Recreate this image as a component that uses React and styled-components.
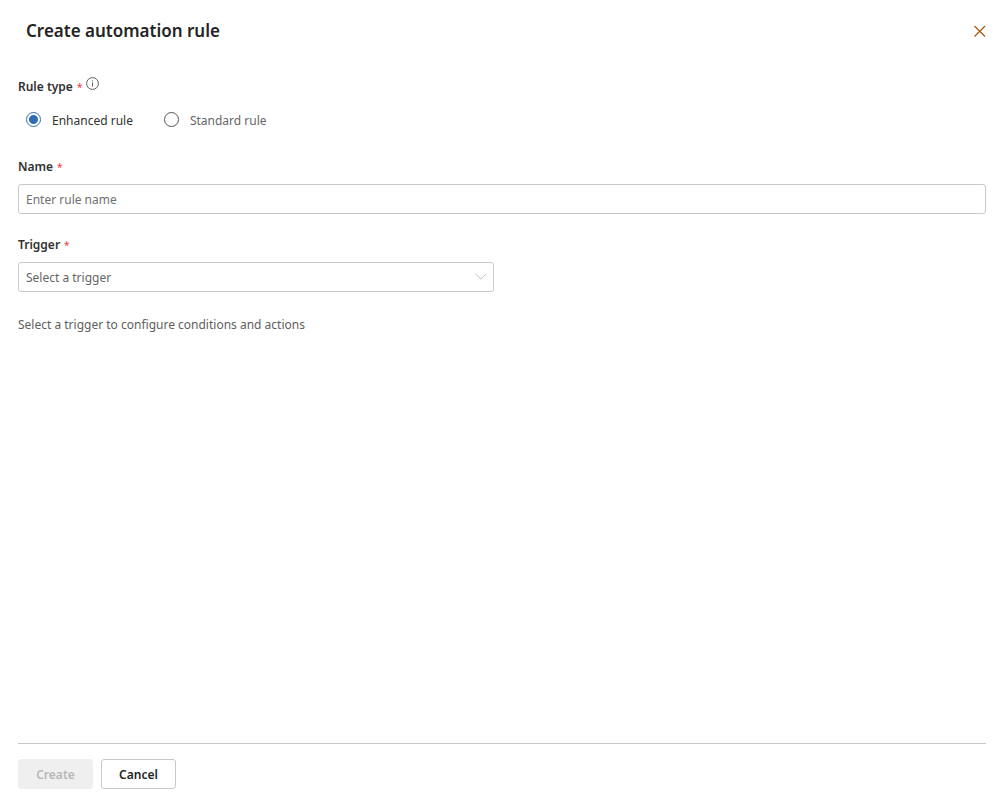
import React, { useState } from "react";
import styled, { createGlobalStyle } from "styled-components";

const GlobalStyle = createGlobalStyle`
  *, *::before, *::after { box-sizing: border-box; }
  body {
    margin: 0;
    background: #ffffff;
    color: #323130;
    font-family: "Segoe UI", "Noto Sans", sans-serif;
    font-size: 12px;
    line-height: 20px;
  }
  button, input, select { font: inherit; }
`;

const Panel = styled.div`
  display: flex;
  flex-direction: column;
  min-height: 100vh;
  padding: 0 14px 20px 18px;
`;

const Header = styled.header`
  display: flex;
  align-items: center;
  justify-content: space-between;
  height: 62px;
  padding-left: 8px;
`;

const Title = styled.h1`
  margin: 0;
  font-size: 17px;
  line-height: 24px;
  font-weight: 600;
  color: #242424;
`;

const CloseButton = styled.button`
  display: flex;
  padding: 0;
  border: 0;
  background: none;
  color: #a8540f;
  cursor: pointer;
`;

const Form = styled.form`
  display: flex;
  flex: 1;
  flex-direction: column;
`;

const Fields = styled.div`
  display: flex;
  flex: 1;
  flex-direction: column;
  gap: 21px;
  padding-top: 15px;
`;

const RuleTypeGroup = styled.fieldset`
  min-width: 0;
  margin: 0;
  padding: 0 0 5px;
  border: 0;
`;

const Legend = styled.legend`
  display: flex;
  gap: 4px;
  padding: 0;
  font-weight: 600;
`;

const Required = styled.span`
  color: #f0383e;
  font-size: 10px;
  font-weight: 400;
`;

const InfoIcon = styled.svg`
  display: block;
`;

const RadioRow = styled.div`
  display: flex;
  gap: 31px;
  padding: 14px 0 0 8px;
`;

const RadioLabel = styled.label`
  display: flex;
  align-items: flex-start;
  gap: 11px;
  color: ${(p) => (p.$selected ? "#323130" : "#666666")};
`;

const Radio = styled.input`
  appearance: none;
  width: 15px;
  height: 15px;
  margin: 1px 0 0;
  border: 1px solid #555555;
  border-radius: 50%;
  background: #ffffff;

  &:checked {
    border-color: #2f6cb3;
    background: radial-gradient(circle, #2f6cb3 4px, #ffffff 5px);
  }
`;

const Field = styled.div`
  display: flex;
  flex-direction: column;
  gap: 7px;
  width: ${(p) => p.$width || "100%"};
`;

const FieldLabel = styled.label`
  display: flex;
  gap: 4px;
  font-weight: 600;
`;

const TextInput = styled.input`
  width: 100%;
  height: 30px;
  padding: 0 7px;
  border: 1px solid #c8c8c8;
  border-radius: 3px;
  background: #ffffff;
  color: #323130;

  &::placeholder { color: #707070; opacity: 1; }
`;

const SelectWrap = styled.div`
  position: relative;
`;

const Select = styled.select`
  display: block;
  appearance: none;
  width: 100%;
  height: 30px;
  padding: 2px 28px 0 7px;
  border: 1px solid #c8c8c8;
  border-radius: 3px;
  background: #ffffff;
  color: #666666;
`;

const Chevron = styled.svg`
  position: absolute;
  top: 11px;
  right: 7px;
  pointer-events: none;
`;

const Hint = styled.p`
  margin: 2px 0 0;
  color: #605e5c;
`;

const Footer = styled.footer`
  display: flex;
  gap: 8px;
  padding-top: 15px;
  border-top: 1px solid #c8c8c8;
`;

const Button = styled.button`
  width: 75px;
  height: 30px;
  padding: 2px 0 0;
  border: 1px solid #c8c8c8;
  border-radius: 3px;
  background: #ffffff;
  color: #242424;
  font-weight: 600;

  &:disabled {
    border-color: #efefef;
    background: #efefef;
    color: #b8b8b8;
  }
`;

export default function App() {
  const [ruleType, setRuleType] = useState("enhanced");
  const options = [
    ["enhanced", "Enhanced rule"],
    ["standard", "Standard rule"],
  ];

  return (
    <>
      <GlobalStyle />
      <Panel>
        <Header>
          <Title>Create automation rule</Title>
          <CloseButton type="button" aria-label="Close">
            <svg width="12" height="12" viewBox="0 0 12 12" fill="none" stroke="currentColor" strokeWidth="1.2">
              <path d="M0.5 1 11 11.5M11 1 0.5 11.5" />
            </svg>
          </CloseButton>
        </Header>
        <Form>
          <Fields>
            <RuleTypeGroup>
              <Legend>
                Rule type
                <Required>*</Required>
                <InfoIcon width="13" height="13" viewBox="0 0 13 13" fill="none" stroke="#605e5c">
                  <circle cx="6.5" cy="6.5" r="5.9" strokeWidth="1" />
                  <path d="M6.5 5.5V9.5M6.5 3.3V4.4" strokeWidth="1" />
                </InfoIcon>
              </Legend>
              <RadioRow>
                {options.map(([value, label]) => (
                  <RadioLabel key={value} $selected={ruleType === value}>
                    <Radio
                      type="radio"
                      name="ruleType"
                      value={value}
                      checked={ruleType === value}
                      onChange={() => setRuleType(value)}
                    />
                    {label}
                  </RadioLabel>
                ))}
              </RadioRow>
            </RuleTypeGroup>
            <Field>
              <FieldLabel htmlFor="rule-name">
                Name <Required>*</Required>
              </FieldLabel>
              <TextInput id="rule-name" type="text" placeholder="Enter rule name" />
            </Field>
            <Field $width="calc(50% - 8px)">
              <FieldLabel htmlFor="trigger">
                Trigger <Required>*</Required>
              </FieldLabel>
              <SelectWrap>
                <Select id="trigger" defaultValue="">
                  <option value="">Select a trigger</option>
                </Select>
                <Chevron width="12" height="7" viewBox="0 0 12 7" fill="none" stroke="#c2c2c2">
                  <path d="M0.5 0.7 6 6.2 11.5 0.7" />
                </Chevron>
              </SelectWrap>
            </Field>
            <Hint>Select a trigger to configure conditions and actions</Hint>
          </Fields>
          <Footer>
            <Button type="submit" disabled>Create</Button>
            <Button type="button">Cancel</Button>
          </Footer>
        </Form>
      </Panel>
    </>
  );
}
